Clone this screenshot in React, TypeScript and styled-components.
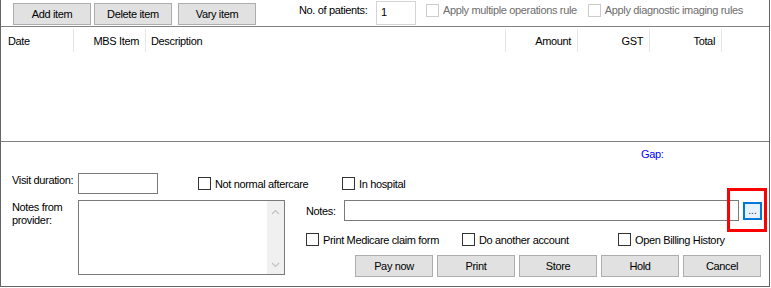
import React from "react";
import styled, { createGlobalStyle } from "styled-components";

const GlobalStyle = createGlobalStyle`
  body {
    margin: 0;
    background: #ffffff;
    font-family: "Liberation Sans", Arial, sans-serif;
    font-size: 11px;
    letter-spacing: -0.35px;
    color: #000000;
  }
`;

interface Column {
  label: string;
  width: number;
  align: "left" | "right";
  pad?: number;
}

const columns: Column[] = [
  { label: "Date", width: 73, align: "left", pad: 7 },
  { label: "MBS Item", width: 72, align: "right" },
  { label: "Description", width: 360, align: "left", pad: 5 },
  { label: "Amount", width: 72, align: "right" },
  { label: "GST", width: 72, align: "right" },
  { label: "Total", width: 72, align: "right" },
];

const Check = ({ label, disabled }: { label: string; disabled?: boolean }) => (
  <CheckLabel $disabled={disabled}>
    <Box $disabled={disabled} />
    {label}
  </CheckLabel>
);

const Chevron = ({ up }: { up?: boolean }) => (
  <svg width="9" height="6" viewBox="0 0 9 6">
    <path
      d={up ? "M1 5 L4.5 1.5 L8 5" : "M1 1 L4.5 4.5 L8 1"}
      fill="none"
      stroke="#c2c2c2"
      strokeWidth="1.2"
    />
  </svg>
);

export default function App() {
  return (
    <>
      <GlobalStyle />
      <Frame>
        <Toolbar>
          <Button $ml={12}>Add item</Button>
          <Button $ml={3}>Delete item</Button>
          <Button $ml={6}>Vary item</Button>
          <PatientsLabel>No. of patients:</PatientsLabel>
          <PatientsInput>1</PatientsInput>
          <TopChecks>
            <Check label="Apply multiple operations rule" disabled />
            <Check label="Apply diagnostic imaging rules" disabled />
          </TopChecks>
        </Toolbar>

        <ListView>
          <HeaderRow>
            {columns.map((c) => (
              <HeaderCell
                key={c.label}
                $width={c.width}
                $align={c.align}
                $pad={c.pad ?? 0}
              >
                {c.label}
              </HeaderCell>
            ))}
          </HeaderRow>
        </ListView>

        <Bottom>
          <GapRow>Gap:</GapRow>

          <VisitRow>
            <FieldLabel $top={1}>Visit duration:</FieldLabel>
            <TextBox $width={80} />
            <CheckCell $ml={40} $width={144}>
              <Check label="Not normal aftercare" />
            </CheckCell>
            <CheckCell $width={100}>
              <Check label="In hospital" />
            </CheckCell>
          </VisitRow>

          <MainRow>
            <FieldLabel $top={1}>
              Notes from
              <br />
              provider:
            </FieldLabel>
            <Memo>
              <MemoBody />
              <ScrollBar>
                <Chevron up />
                <Chevron />
              </ScrollBar>
            </Memo>

            <RightColumn>
              <NotesRow>
                <NotesLabel>Notes:</NotesLabel>
                <TextBox $width={395} />
                <EllipsisButton>...</EllipsisButton>
              </NotesRow>
              <OptionRow>
                <CheckCell $width={156}>
                  <Check label="Print Medicare claim form" />
                </CheckCell>
                <CheckCell $width={156}>
                  <Check label="Do another account" />
                </CheckCell>
                <CheckCell $width={140}>
                  <Check label="Open Billing History" />
                </CheckCell>
              </OptionRow>
              <ActionRow>
                <Button>Pay now</Button>
                <Button>Print</Button>
                <Button>Store</Button>
                <Button>Hold</Button>
                <Button>Cancel</Button>
              </ActionRow>
            </RightColumn>
          </MainRow>
        </Bottom>

        <Highlight />
      </Frame>
    </>
  );
}

const Frame = styled.div`
  position: relative;
  box-sizing: border-box;
  width: 770px;
  height: 287px;
  border-left: 1px solid #646464;
  border-right: 1px solid #646464;
  border-bottom: 1px solid #646464;
  display: flex;
  flex-direction: column;
`;

const Toolbar = styled.div`
  height: 26px;
  display: flex;
  align-items: flex-start;
  padding-top: 3px;
  box-sizing: border-box;
`;

const Button = styled.div<{ $ml?: number }>`
  box-sizing: border-box;
  flex-shrink: 0;
  width: 78px;
  height: 22px;
  margin-left: ${(p) => p.$ml ?? 0}px;
  background: #e1e1e1;
  border: 1px solid #adadad;
  display: flex;
  align-items: center;
  justify-content: center;
  white-space: nowrap;
`;

const PatientsLabel = styled.div`
  flex-shrink: 0;
  margin-left: 43px;
  width: 77px;
  height: 20px;
  display: flex;
  align-items: center;
  margin-top: -3px;
  white-space: nowrap;
`;

const PatientsInput = styled.div`
  box-sizing: border-box;
  flex-shrink: 0;
  width: 40px;
  height: 24px;
  margin-top: -2px;
  border: 1px solid #d4d4d4;
  padding: 4px 0 0 4px;
`;

const TopChecks = styled.div`
  display: flex;
  gap: 11px;
  margin-left: 10px;
  height: 20px;
  align-items: center;
  margin-top: -3px;
`;

const CheckLabel = styled.label<{ $disabled?: boolean }>`
  display: flex;
  align-items: center;
  gap: 4px;
  white-space: nowrap;
  color: ${(p) => (p.$disabled ? "#6d6d6d" : "#000000")};
`;

const Box = styled.span<{ $disabled?: boolean }>`
  box-sizing: border-box;
  width: 13px;
  height: 13px;
  background: #ffffff;
  border: 1px solid ${(p) => (p.$disabled ? "#cccccc" : "#333333")};
  flex-shrink: 0;
`;

const ListView = styled.div`
  box-sizing: border-box;
  height: 116px;
  border-top: 1px solid #828282;
  border-bottom: 1px solid #828282;
`;

const HeaderRow = styled.div`
  display: flex;
  padding-top: 2px;
`;

const HeaderCell = styled.div<{
  $width: number;
  $align: "left" | "right";
  $pad: number;
}>`
  box-sizing: border-box;
  flex-shrink: 0;
  width: ${(p) => p.$width}px;
  height: 23px;
  border-right: 1px solid #e5e5e5;
  display: flex;
  align-items: center;
  justify-content: ${(p) => (p.$align === "right" ? "flex-end" : "flex-start")};
  padding: 0 6px 0 ${(p) => p.$pad}px;
`;

const Bottom = styled.div`
  display: flex;
  flex-direction: column;
`;

const GapRow = styled.div`
  height: 24px;
  display: flex;
  align-items: center;
  padding-left: 640px;
  color: #0000ff;
`;

const VisitRow = styled.div`
  margin-top: 7px;
  height: 21px;
  display: flex;
  align-items: center;
  padding-left: 11px;
`;

const FieldLabel = styled.div<{ $top: number }>`
  flex-shrink: 0;
  width: 66px;
  align-self: flex-start;
  margin-top: ${(p) => p.$top}px;
  line-height: 13px;
  white-space: nowrap;
`;

const TextBox = styled.div<{ $width: number }>`
  box-sizing: border-box;
  flex-shrink: 0;
  width: ${(p) => p.$width}px;
  height: 21px;
  border: 1px solid #7a7a7a;
  background: #ffffff;
`;

const CheckCell = styled.div<{ $width: number; $ml?: number }>`
  flex-shrink: 0;
  width: ${(p) => p.$width}px;
  margin-left: ${(p) => p.$ml ?? 0}px;
`;

const MainRow = styled.div`
  margin-top: 6px;
  display: flex;
  padding-left: 11px;
`;

const Memo = styled.div`
  box-sizing: border-box;
  flex-shrink: 0;
  width: 207px;
  height: 75px;
  border: 1px solid #7a7a7a;
  display: flex;
`;

const MemoBody = styled.div`
  flex: 1;
`;

const ScrollBar = styled.div`
  width: 17px;
  background: #f0f0f0;
  display: flex;
  flex-direction: column;
  align-items: center;
  justify-content: space-between;
  padding: 8px 0 6px;
  box-sizing: border-box;
`;

const RightColumn = styled.div`
  flex-shrink: 0;
  width: 456px;
  margin-left: 21px;
  display: flex;
  flex-direction: column;
`;

const NotesRow = styled.div`
  display: flex;
  align-items: center;
  height: 21px;
`;

const NotesLabel = styled.div`
  flex-shrink: 0;
  width: 38px;
  white-space: nowrap;
`;

const EllipsisButton = styled.div`
  box-sizing: border-box;
  flex-shrink: 0;
  margin-left: 4px;
  width: 19px;
  height: 18px;
  border: 2px solid #0078d7;
  background: #e5f1fb;
  display: flex;
  align-items: flex-end;
  justify-content: center;
  padding-bottom: 3px;
  font-size: 10px;
  line-height: 8px;
  letter-spacing: 0;
  color: #333333;
`;

const OptionRow = styled.div`
  margin-top: 8px;
  height: 21px;
  display: flex;
  align-items: center;
`;

const ActionRow = styled.div`
  margin-top: 5px;
  display: flex;
  justify-content: flex-end;
  gap: 4px;
  padding-right: 1px;
`;

const Highlight = styled.div`
  position: absolute;
  left: 726px;
  top: 188px;
  width: 40px;
  height: 44px;
  box-sizing: border-box;
  border: 3px solid #ff0000;
  pointer-events: none;
`;
